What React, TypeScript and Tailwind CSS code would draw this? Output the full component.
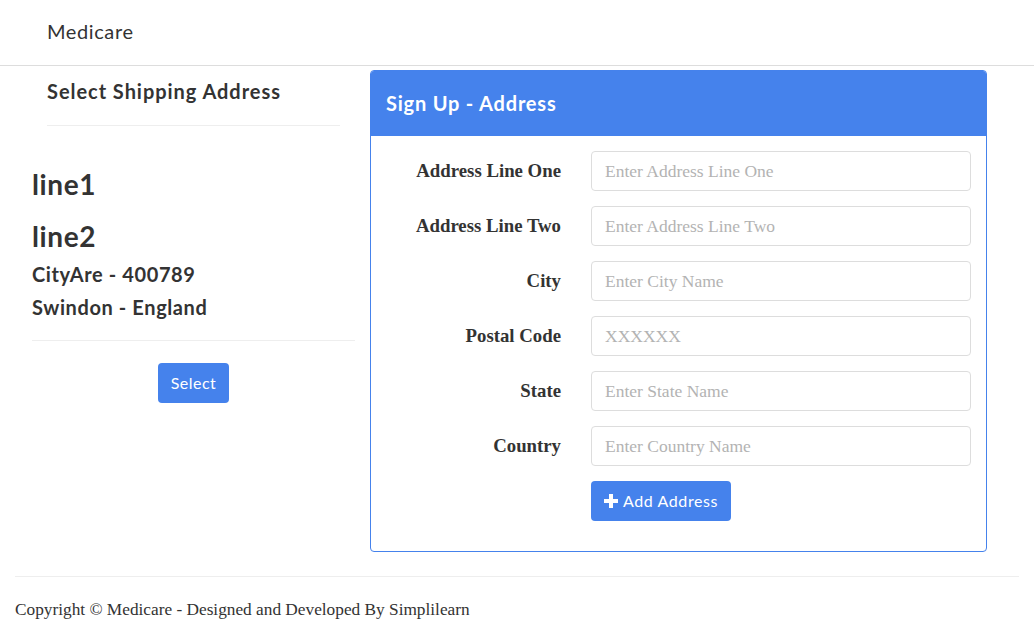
import React from 'react';

const sans = "font-['Lato','Open_Sans',sans-serif]";
const serif = "font-['Liberation_Serif','DejaVu_Serif',serif]";

const fields = [
    { label: 'Address Line One', placeholder: 'Enter Address Line One' },
    { label: 'Address Line Two', placeholder: 'Enter Address Line Two' },
    { label: 'City', placeholder: 'Enter City Name' },
    { label: 'Postal Code', placeholder: 'XXXXXX' },
    { label: 'State', placeholder: 'Enter State Name' },
    { label: 'Country', placeholder: 'Enter Country Name' },
];

function Navbar() {
    return (
        <div className="h-[66px] border-b border-[#dddddd] flex items-center px-[47px]">
            <span className={`${sans} text-[20px] tracking-[0.6px] text-[#333333] -mt-[3px]`}>Medicare</span>
        </div>
    );
}

function AddressList() {
    return (
        <div className="w-[323px] shrink-0 text-[#333333]">
            <div className="px-[15px]">
                <h3
                    className={`${sans} font-bold text-[20px] tracking-[0.95px] pt-[10px] pb-[19px] border-b border-[#eeeeee]`}
                >
                    Select Shipping Address
                </h3>
            </div>
            <div className={`${sans} pt-[40px] tracking-[0.6px]`}>
                <h2 className="font-bold text-[28px] leading-[36px]">line1</h2>
                <h2 className="font-bold text-[28px] leading-[36px] mt-[16px]">line2</h2>
                <h4 className="font-bold text-[20px] leading-[26px] mt-[7px]">CityAre - 400789</h4>
                <h4 className="font-bold text-[20px] leading-[26px] mt-[7px]">Swindon - England</h4>
                <div className="border-b border-[#eeeeee] mt-[20px]"></div>
                <div className="flex justify-center mt-[22px]">
                    <button className="h-[40px] px-[13px] rounded bg-[#4582ec] text-white text-[16px] tracking-[0.5px]">
                        Select
                    </button>
                </div>
            </div>
        </div>
    );
}

function PlusIcon() {
    return (
        <svg width="14" height="14" viewBox="0 0 14 14" className="mr-[5px]">
            <path d="M5 0h4v5h5v4H9v5H5V9H0V5h5z" fill="white" />
        </svg>
    );
}

function AddressForm() {
    return (
        <div className="w-[617px] ml-[15px] mt-[4px] h-[482px] border border-[#4582ec] rounded overflow-hidden">
            <div className="h-[65px] bg-[#4582ec] flex items-center px-[15px]">
                <h3 className={`${sans} text-white font-bold text-[20px] tracking-[0.8px] -mt-[2px]`}>
                    Sign Up - Address
                </h3>
            </div>
            <div className="pt-[15px] flex flex-col gap-[15px]">
                {fields.map((f) => (
                    <div key={f.label} className="flex items-center">
                        <label
                            className={`${serif} w-[190px] text-right font-bold text-[18.8px] text-[#333333]`}
                        >
                            {f.label}
                        </label>
                        <input
                            className={`${serif} ml-[30px] w-[380px] h-[40px] border border-[#dddddd] rounded px-[13px] text-[17.5px] placeholder:text-[#b3b3b3] outline-none`}
                            placeholder={f.placeholder}
                        />
                    </div>
                ))}
                <div className="flex">
                    <button
                        className={`${sans} ml-[220px] h-[40px] px-[13px] rounded bg-[#4582ec] text-white text-[16px] tracking-[0.6px] flex items-center`}
                    >
                        <PlusIcon />
                        Add Address
                    </button>
                </div>
            </div>
        </div>
    );
}

export default function App() {
    return (
        <div className="w-[1034px] h-[634px] bg-white overflow-hidden">
            <Navbar />
            <div className="flex pl-[32px]">
                <AddressList />
                <AddressForm />
            </div>
            <div className="mx-[15px] mt-[24px] border-t border-[#eeeeee]">
                <p className={`${serif} text-[17.3px] text-[#333333] pt-[20px]`}>
                    Copyright © Medicare - Designed and Developed By Simplilearn
                </p>
            </div>
        </div>
    );
}
